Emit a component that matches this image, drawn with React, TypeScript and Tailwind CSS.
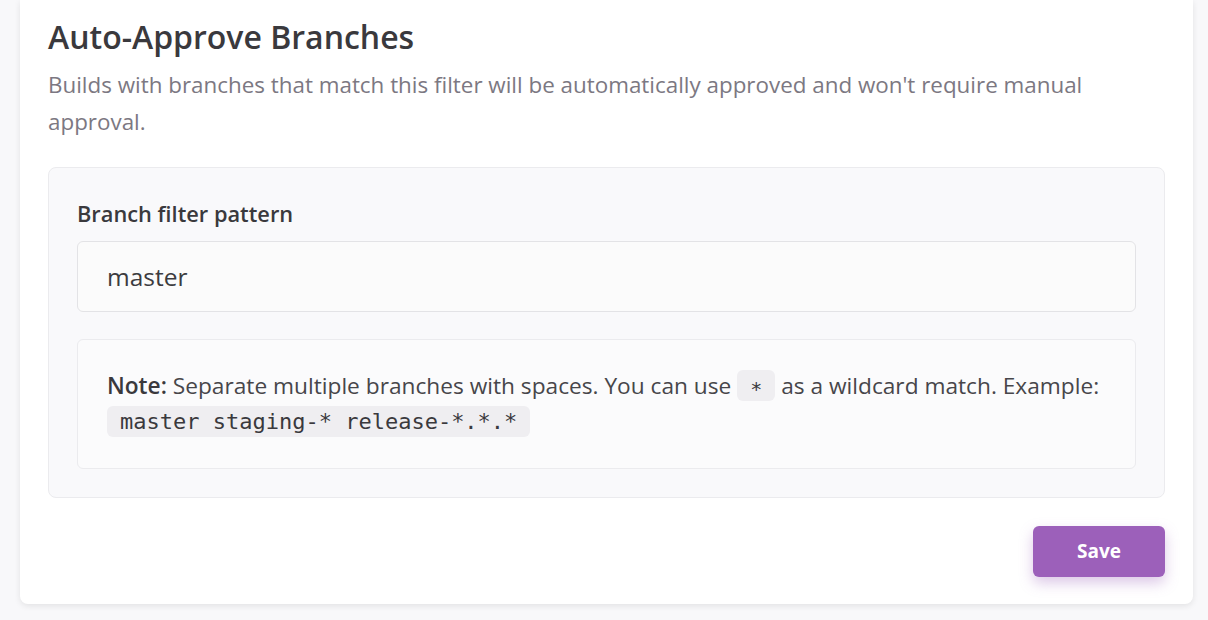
export default function App() {
  return (
    <div className="min-h-[620px] w-full bg-[#f8f8fa] font-['Open_Sans',sans-serif]">
      <div className="ml-[20px] w-[1173px] rounded-b-lg bg-white px-[28px] pt-[17px] pb-[27px] shadow-[0_2px_6px_rgba(0,0,0,0.09)]">
        {/* Header */}
        <h2 className="text-[32px] leading-[40px] font-semibold text-[#3a393d]">Auto-Approve Branches</h2>
        <p className="mt-[9px] text-[22.4px] leading-[37px] text-[#7c7882]">
          Builds with branches that match this filter will be automatically approved and won't require manual approval.
        </p>

        {/* Filter panel */}
        <div className="mt-[27px] rounded-lg border border-[#ebebee] bg-[#f9f9fb] p-[28px]">
          <label className="block text-[21.8px] leading-[36px] font-semibold text-[#3a393d]">Branch filter pattern</label>
          <input
            readOnly
            value="master"
            className="mt-[9px] block h-[71px] w-full rounded-md border border-[#e3e3e6] bg-[#fbfbfb] px-[29px] text-[24.5px] text-[#3c3b3f] outline-none"
          />

          <div className="mt-[27px] rounded-md border border-[#ebebee] bg-[#fbfbfc] px-[29px] py-[28px] text-[22.7px] leading-[36px] text-[#47464a]">
            <span className="font-semibold text-[#3a393d]">Note:</span> Separate multiple branches with spaces. You can use{" "}
            <code className="inline-block h-[31px] rounded-md bg-[#efeef1] px-[13px] align-text-bottom font-['DejaVu_Sans_Mono',monospace] text-[20px] leading-[39px] text-[#3a393d]">
              *
            </code>{" "}
            as a wildcard match. Example:{" "}
            <code className="inline-block h-[31px] rounded-md bg-[#efeef1] px-[13px] align-text-bottom font-['DejaVu_Sans_Mono',monospace] text-[22px] leading-[31px] text-[#3a393d]">
              master staging-* release-*.*.*
            </code>
          </div>
        </div>

        {/* Actions */}
        <div className="mt-[28px] flex justify-end">
          <button className="h-[51px] w-[132px] rounded-md bg-[#9c60ba] text-[19px] font-bold text-white shadow-[0_6px_14px_rgba(156,96,186,0.35)]">
            Save
          </button>
        </div>
      </div>
    </div>
  );
}
